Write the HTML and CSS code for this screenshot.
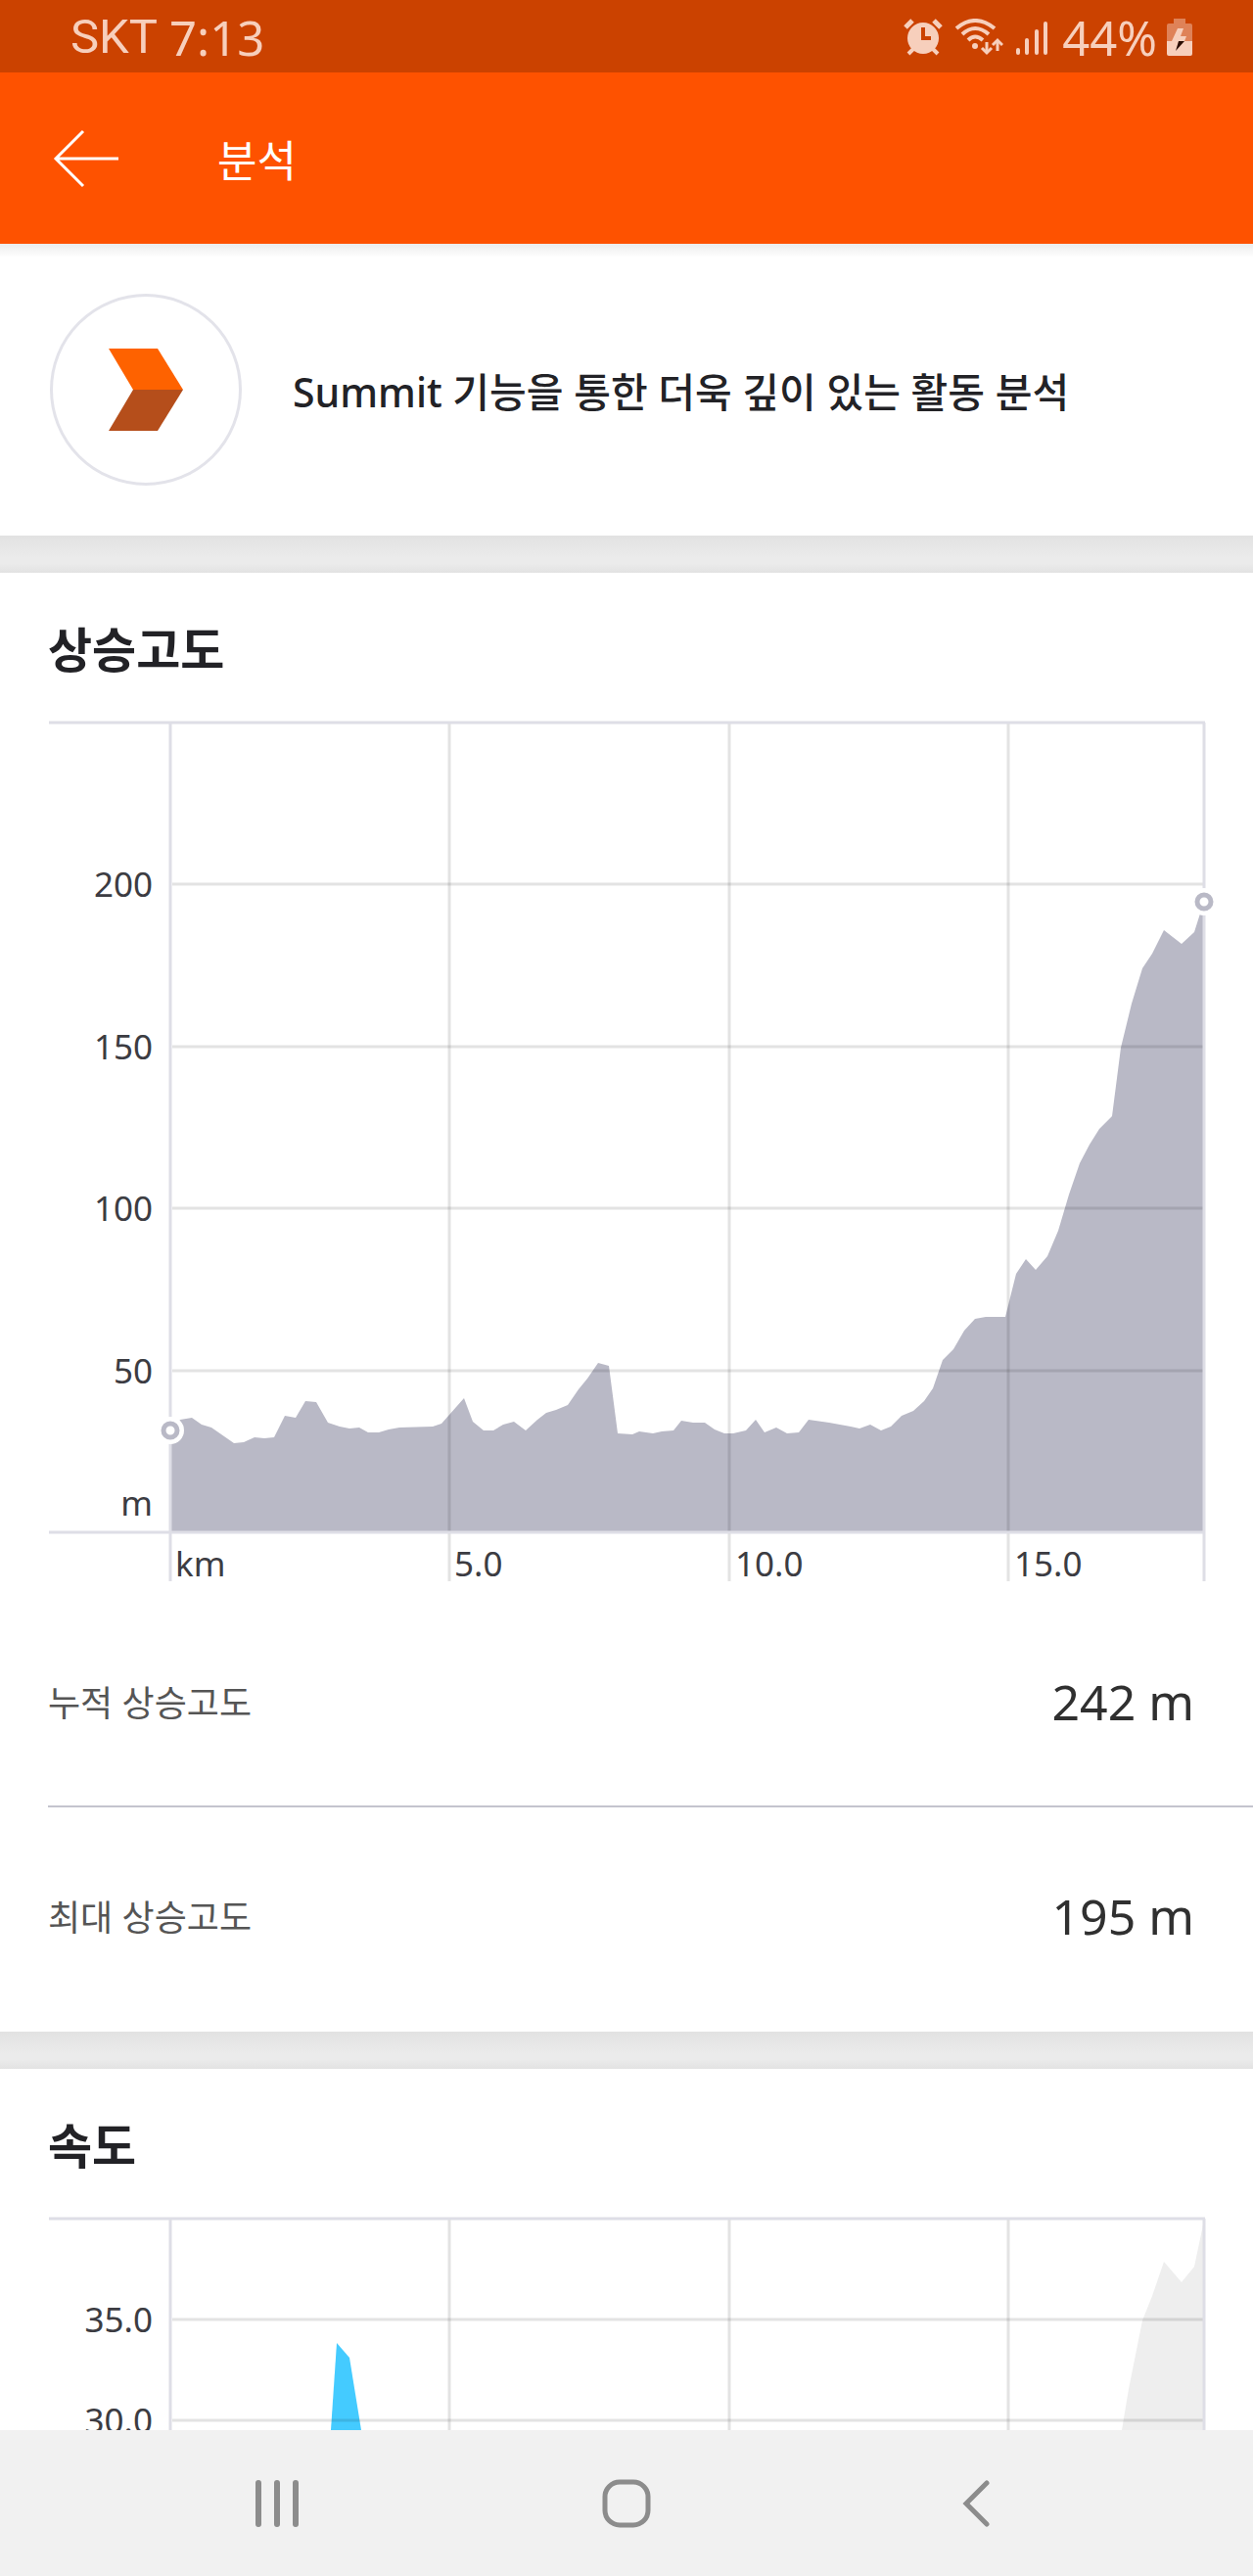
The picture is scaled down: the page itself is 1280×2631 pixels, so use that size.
FILE: index.html
```html
<!DOCTYPE html>
<html lang="ko">
<head>
    <meta charset="UTF-8">
    <meta name="viewport" content="width=device-width, initial-scale=1.0">
    <title>분석</title>
    <link rel="stylesheet" href="styles.css">
</head>
<body>
    <div class="status-bar">
        <span class="carrier">SKT</span>
        <span class="clock">7:13</span>
        <div class="status-icons">
            <!-- alarm -->
            <svg width="40" height="38" viewBox="0 0 40 38">
                <path d="M2 9L9 2M38 9L31 2" stroke="#f7cfbc" stroke-width="5"/>
                <path d="M5 36L10 31M35 36L30 31" stroke="#f7cfbc" stroke-width="4"/>
                <circle cx="20" cy="20" r="16" fill="#f7cfbc"/>
                <path d="M20 9V20H28" fill="none" stroke="#cb4200" stroke-width="4"/>
            </svg>
            <!-- wifi -->
            <svg width="50" height="38" viewBox="0 0 50 38">
                <g fill="none" stroke="#f7cfbc" stroke-width="4">
                    <path d="M2 10Q21 -6 41 10M8 16Q21 4 35 16M14 22Q21 15 29 22"/>
                    <path d="M33 24V34M44 33V24" stroke-width="3"/>
                    <path d="M28 30L33 35L38 30M39 27L44 22L49 27" stroke-width="3"/>
                </g>
                <circle cx="21" cy="28" r="3" fill="#f7cfbc"/>
            </svg>
            <!-- signal -->
            <svg width="34" height="38" viewBox="0 0 34 38">
                <path d="M3 32V35M12 22V35M22 13V35M31 5V35" stroke="#f7cfbc" stroke-width="4" stroke-linecap="round"/>
            </svg>
        </div>
        <span class="battery-level">44%</span>
        <svg width="26" height="38" viewBox="0 0 26 38">
            <path d="M7 0H19V5H24Q26 5 26 7V23H0V7Q0 5 2 5H7Z" fill="#df8258"/>
            <path d="M0 23H26V36Q26 38 24 38H2Q0 38 0 36Z" fill="#f7cfbc"/>
            <path d="M11 10H17L14 18H20L18 23H5Z" fill="#f7cfbc"/>
            <path d="M12 23H18L9 33Z" fill="#2a0d02"/>
        </svg>
    </div>

    <header class="app-bar">
        <button type="button" class="back" aria-label="뒤로">
            <svg width="68" height="60" viewBox="0 0 68 60">
                <path d="M67 30H3M31 2L3 30L31 58" fill="none" stroke="#fff" stroke-width="3"/>
            </svg>
        </button>
        <h1>분석</h1>
    </header>

    <main>
        <section class="summit">
            <div class="summit-logo">
                <svg width="76" height="84" viewBox="0 0 76 84">
                    <path d="M0 0H50L76 42H25Z" fill="#fe6200"/>
                    <path d="M25 42H76L50 84H0Z" fill="#b54e1b"/>
                </svg>
            </div>
            <p>Summit 기능을 통한 더욱 깊이 있는 활동 분석</p>
        </section>

        <section class="card">
            <h2>상승고도</h2>
            <svg class="chart" viewBox="0 0 1280 900" role="img" aria-label="상승고도">
                <path fill="#b9b9c6" d="M175 844V740L184 729L196 727L206 734L216 737L239 753L249 752L260 747L270 748L280 747L291 725L302 727L312 710L323 711L335 732L347 736L357 738L367 737L376 742L387 742L397 739L408 737L442 736L451 733L474 707L483 731L494 740L504 740L514 734L525 731L537 740L549 729L558 722L568 719L580 714L591 698L600 687L611 671L622 674L631 743L646 744L653 741L667 743L676 741L688 740L696 730L708 732L720 732L730 739L740 743L749 743L762 740L772 729L781 742L793 737L804 743L816 742L826 729L847 732L858 734L869 736L878 738L889 734L900 740L910 736L921 725L933 720L944 710L953 697L963 668L974 657L985 638L996 626L1007 624L1027 624L1038 580L1048 565L1058 576L1070 562L1081 536L1092 499L1103 467L1113 448L1123 432L1136 419L1145 349L1156 304L1167 268L1177 253L1189 229L1207 243L1220 231L1226 212L1230 200V844Z"/>
                <g class="grid">
                    <path d="M176 182H1229M176 348H1229M176 513H1229M176 679H1229"/>
                    <path d="M459 18V894M745 18V894M1030 18V894"/>
                </g>
                <path class="frame" d="M50 17H1231M50 844H1231M174 17V894M1230 17V894"/>
                <g class="marker">
                    <circle class="halo" cx="174" cy="740" r="14"/>
                    <circle cx="174" cy="740" r="7"/>
                    <circle class="halo" cx="1230" cy="200" r="14"/>
                    <circle cx="1230" cy="200" r="7"/>
                </g>
                <g class="y-labels">
                    <text x="156" y="195">200</text>
                    <text x="156" y="361">150</text>
                    <text x="156" y="526">100</text>
                    <text x="156" y="692">50</text>
                    <text x="156" y="827">m</text>
                </g>
                <g class="x-labels">
                    <text x="179" y="889">km</text>
                    <text x="464" y="889">5.0</text>
                    <text x="751" y="889">10.0</text>
                    <text x="1036" y="889">15.0</text>
                </g>
            </svg>
            <dl class="stats">
                <div class="stat">
                    <dt>누적 상승고도</dt>
                    <dd>242 m</dd>
                </div>
                <div class="stat">
                    <dt>최대 상승고도</dt>
                    <dd>195 m</dd>
                </div>
            </dl>
        </section>

        <section class="card">
            <h2>속도</h2>
            <svg class="chart" viewBox="0 0 1280 900" role="img" aria-label="속도">
                <path fill="#eeeeee" d="M1136 300L1146 233L1153 191L1167 121L1177 96L1189 61L1207 82L1220 66L1228 28L1230 17V300Z"/>
                <path fill="#44cbff" d="M336 300L338 233L344 144L357 159L369 233L376 300Z"/>
                <g class="grid">
                    <path d="M176 120H1229M176 223H1229"/>
                    <path d="M459 18V894M745 18V894M1030 18V894"/>
                </g>
                <path class="frame" d="M50 17H1231M174 17V894M1230 17V894"/>
                <g class="y-labels">
                    <text x="156" y="133">35.0</text>
                    <text x="156" y="236">30.0</text>
                </g>
            </svg>
        </section>
    </main>

    <nav class="nav-bar">
        <button type="button" aria-label="최근 앱">
            <svg width="50" height="50" viewBox="0 0 50 50">
                <path d="M6 4V46M25 4V46M44 4V46" stroke="#8c8c8c" stroke-width="6" stroke-linecap="round"/>
            </svg>
        </button>
        <button type="button" aria-label="홈">
            <svg width="50" height="50" viewBox="0 0 50 50">
                <rect x="3" y="3" width="44" height="44" rx="15" fill="none" stroke="#8c8c8c" stroke-width="5"/>
            </svg>
        </button>
        <button type="button" aria-label="뒤로">
            <svg width="50" height="50" viewBox="0 0 50 50">
                <path d="M36 4L15 25L36 46" fill="none" stroke="#8c8c8c" stroke-width="5" stroke-linecap="round"/>
            </svg>
        </button>
    </nav>
</body>
</html>
```

FILE: styles.css
```css
* {
    box-sizing: border-box;
    margin: 0;
    padding: 0;
}
body {
    display: flex;
    flex-direction: column;
    height: 100vh;
    font-family: "Noto Sans", "Noto Sans CJK KR", sans-serif;
    background-color: #fff;
    color: #222226;
}
button {
    border: none;
    background: none;
    cursor: pointer;
}
svg {
    display: block;
}
.status-bar {
    display: flex;
    flex-shrink: 0;
    align-items: center;
    height: 74px;
    padding: 2px 62px 0 72px;
    background-color: #cb4200;
    color: #f7cfbc;
    font-size: 49px;
    font-weight: 400;
    line-height: 72px;
}
.carrier {
    margin-right: 12px;
    font-family: Roboto, sans-serif;
}
.status-icons {
    display: flex;
    gap: 12px;
    margin-left: auto;
}
.battery-level {
    margin: 0 10px 0 14px;
}
.app-bar {
    display: flex;
    flex-shrink: 0;
    align-items: center;
    gap: 100px;
    height: 175px;
    padding: 0 54px;
    background-color: #fe5200;
    color: #fff;
}
.app-bar h1 {
    font-size: 44px;
    font-weight: 400;
}
main {
    flex: 1;
    min-height: 0;
    overflow: hidden;
    background-color: #fff;
}
.summit {
    display: flex;
    align-items: center;
    gap: 52px;
    padding: 51px;
    background: linear-gradient(#ececec, #fff 14px);
}
.summit-logo {
    display: flex;
    flex-shrink: 0;
    align-items: center;
    justify-content: center;
    width: 196px;
    height: 196px;
    border: 3px solid #e3e3ea;
    border-radius: 50%;
}
.summit p {
    font-size: 41px;
    font-weight: 500;
}
.card::before {
    content: "";
    display: block;
    height: 38px;
    background: linear-gradient(#e2e2e2, #ebebeb 60%, #ebebeb 75%, #e2e2e2);
}
.card h2 {
    padding: 46px 49px 26px;
    font-size: 49px;
    font-weight: 700;
    line-height: 64px;
}
.chart {
    width: 100%;
    height: auto;
}
.grid {
    fill: none;
    stroke: #000;
    stroke-opacity: 0.11;
    stroke-width: 3px;
}
.frame {
    fill: none;
    stroke: #dedee6;
    stroke-width: 3px;
}
.marker circle {
    fill: #fff;
    stroke: #b9b9c6;
    stroke-width: 5px;
}
.marker .halo {
    stroke: none;
}
.chart text {
    fill: #3c3c42;
    font-size: 35px;
    font-weight: 400;
}
.y-labels {
    text-anchor: end;
}
.stats {
    padding: 5px 0 13px 49px;
}
.stat {
    display: flex;
    align-items: center;
    justify-content: space-between;
    height: 218px;
    padding: 5px 60px 0 0;
}
.stat + .stat {
    border-top: 2px solid #c4c4ce;
}
.stat dt {
    color: #555;
    font-size: 36px;
}
.stat dd {
    color: #303030;
    font-size: 50px;
    font-weight: 400;
}
.nav-bar {
    display: flex;
    flex-shrink: 0;
    align-items: center;
    height: 149px;
    padding: 0 104px;
    background-color: #f1f1f1;
}
.nav-bar button {
    display: flex;
    flex: 1;
    justify-content: center;
}
```
